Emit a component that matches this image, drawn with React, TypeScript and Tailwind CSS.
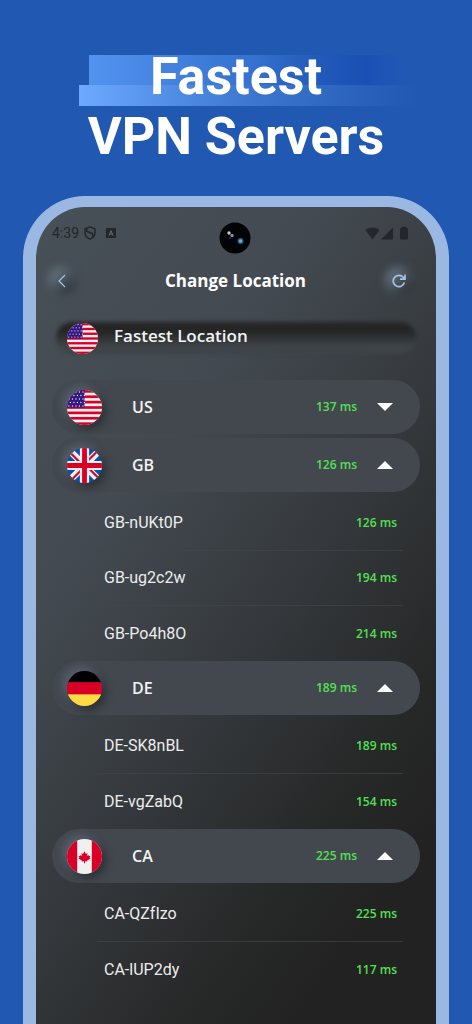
import { useState } from "react";

type Server = { name: string; ping: number };
type Country = { code: string; ping: number; open: boolean; servers: Server[] };

const COUNTRIES: Country[] = [
  { code: "US", ping: 137, open: false, servers: [] },
  {
    code: "GB",
    ping: 126,
    open: true,
    servers: [
      { name: "GB-nUKt0P", ping: 126 },
      { name: "GB-ug2c2w", ping: 194 },
      { name: "GB-Po4h8O", ping: 214 },
    ],
  },
  {
    code: "DE",
    ping: 189,
    open: true,
    servers: [
      { name: "DE-SK8nBL", ping: 189 },
      { name: "DE-vgZabQ", ping: 154 },
    ],
  },
  {
    code: "CA",
    ping: 225,
    open: true,
    servers: [
      { name: "CA-QZfIzo", ping: 225 },
      { name: "CA-lUP2dy", ping: 117 },
    ],
  },
];

const UsFlag = () => (
  <>
    <rect width="36" height="36" fill="#f3f3f3" />
    {[0, 1, 2, 3, 4, 5, 6].map((i) => (
      <rect key={i} y={i * 5.54} width="36" height="2.77" fill="#d80027" />
    ))}
    <rect width="18" height="18" fill="#33197f" />
    {[0, 1, 2, 3, 4].map((r) =>
      [0, 1, 2, 3, 4].map((c) => (
        <circle key={`${r}-${c}`} cx={2 + c * 3.6 + (r % 2) * 1.5} cy={2 + r * 3.6} r="0.7" fill="#e8e4f5" />
      ))
    )}
  </>
);

const GbFlag = () => (
  <>
    <rect width="36" height="36" fill="#0052b4" />
    <path d="M0 0L36 36M36 0L0 36" stroke="#f0f0f0" strokeWidth="7" />
    <path d="M0 1.5L18 19.5M36 34.5L18 16.5M34.5 0L16.5 18M1.5 36L19.5 18" stroke="#d80027" strokeWidth="2.2" />
    <path d="M18 0V36M0 18H36" stroke="#f0f0f0" strokeWidth="9.5" />
    <path d="M18 0V36M0 18H36" stroke="#d80027" strokeWidth="5" />
  </>
);

const DeFlag = () => (
  <>
    <rect width="36" height="12" fill="#000" />
    <rect y="11.5" width="36" height="13" fill="#d80027" />
    <rect y="24" width="36" height="12" fill="#ffda44" />
  </>
);

const CaFlag = () => (
  <>
    <rect width="36" height="36" fill="#f0f0f0" />
    <rect width="10.5" height="36" fill="#d80027" />
    <rect x="25.5" width="10.5" height="36" fill="#d80027" />
    <path
      d="M18 12.5l1.5 2.8 1.6-.8-.5 3 1.6-1.1.3 1 1.7.2-1 1.7 1 .7-3.5 2.2.2 1-2.4-.3V25h-1v-2.1l-2.4.3.2-1-3.5-2.2 1-.7-1-1.7 1.7-.2.3-1 1.6 1.1-.5-3 1.6.8z"
      fill="#d80027"
    />
  </>
);

const FLAGS: Record<string, () => React.JSX.Element> = {
  US: UsFlag,
  GB: GbFlag,
  DE: DeFlag,
  CA: CaFlag,
};

const Flag = ({ code, className }: { code: string; className: string }) => {
  const Art = FLAGS[code];
  return (
    <svg viewBox="0 0 36 36" aria-hidden="true" className={`shrink-0 rounded-full ${className}`}>
      <Art />
    </svg>
  );
};

const StatusBar = () => (
  <div className="flex h-[31px] items-center px-4 text-[#23272b]">
    <span className="font-[Roboto,sans-serif] text-sm">4:39</span>
    <svg viewBox="0 0 12 14" className="ml-[5px] h-[14px] w-[12px]" fill="none" stroke="currentColor" strokeWidth="1.4" aria-hidden="true">
      <path d="M6 .9L11 2.8V6.5C11 9.6 9 12 6 13 3 12 1 9.6 1 6.5V2.8Z" />
      <path d="M2.8 2.5V5.5L8.6 7.6V11.4" />
    </svg>
    <svg viewBox="0 0 10 10" className="ml-2.5 size-[10px]" aria-hidden="true">
      <rect width="10" height="10" rx="1" fill="currentColor" />
      <path d="M3 7.7L5 2.6 7 7.7M3.7 6.1H6.3" stroke="#646c73" strokeWidth="1" fill="none" />
    </svg>
    {/* front camera */}
    <svg viewBox="0 0 32 32" className="ml-[103px] mt-2.5 size-8" aria-hidden="true">
      <circle cx="16" cy="16" r="15.5" fill="#020304" />
      <circle cx="10" cy="11" r="1.7" fill="#bccbd0" />
      <circle cx="13" cy="13.5" r="1.7" fill="#8d86ae" />
      <circle cx="11" cy="16" r="1.2" fill="#1a2948" />
      <circle cx="21.5" cy="19" r="3" fill="#285a86" />
      <circle cx="21.5" cy="19" r="1.7" fill="#62aede" />
    </svg>
    <svg viewBox="0 0 44 14" className="ml-auto mr-[11px] h-[14px] w-[44px]" fill="currentColor" aria-hidden="true">
      <path d="M7.5 13.5L.6 4.2C2 2.5 4.5 1.5 7.5 1.5S13 2.5 14.4 4.2Z" />
      <path d="M28 1.5V13.5H16Z" />
      <path d="M37 1.5V.8H41V1.5Q43 1.5 43 3.3V12Q43 13.5 41.5 13.5H36.5Q35 13.5 35 12V3.3Q35 1.5 37 1.5Z" />
    </svg>
  </div>
);

const IconButton = ({ label, className, children }: { label: string; className: string; children: React.ReactNode }) => (
  <button
    type="button"
    aria-label={label}
    className={`relative isolate flex size-6 items-center justify-center text-[#a5c2e2] ${className}`}
  >
    <span className="absolute -inset-0.5 -z-10 rounded-full bg-linear-to-br from-[#788b9e] via-[#4b545d] to-[#202326] blur-[4px]" />
    {children}
  </button>
);

const CountryGroup = ({ country }: { country: Country }) => {
  const [open, setOpen] = useState(country.open);
  return (
    <li>
      <button
        type="button"
        aria-expanded={open}
        onClick={() => setOpen(!open)}
        className="mb-1 flex h-[54px] w-full items-center rounded-full bg-[#43484f] pl-[15px] pr-[27px] text-left"
      >
        <Flag code={country.code} className="size-[35px] shadow-[-4px_-4px_8px_#6d7f9170,4px_4px_8px_#272a2dcc]" />
        <span className="ml-[30px] grow text-base font-semibold text-[#f3f3f3]">{country.code}</span>
        <span className="text-xs font-semibold text-[#52e052]">{country.ping} ms</span>
        <svg viewBox="0 0 16 8" className="ml-5 h-2 w-4" fill="#fff" aria-hidden="true">
          <path d={open ? "M0 8L8 0L16 8Z" : "M0 0L8 8L16 0Z"} />
        </svg>
      </button>
      {open && (
        <ul className="ml-[45px] mr-[17px] divide-y divide-[#43474f99]">
          {country.servers.map((server) => (
            <li key={server.name} className="flex h-[55px] items-center justify-between pl-[7px] pr-1.5">
              <span className="font-[Roboto,sans-serif] text-base text-[#ededed]">{server.name}</span>
              <span className="text-xs font-semibold text-[#52e052]">{server.ping} ms</span>
            </li>
          ))}
        </ul>
      )}
    </li>
  );
};

export default function App() {
  return (
    <div className="flex h-screen min-h-[640px] flex-col overflow-hidden bg-[#2158b1] px-[23px] font-['Open_Sans',sans-serif]">
      <header className="relative isolate shrink-0 pt-[47px] text-center">
        <div className="absolute left-[66px] right-8 top-[55px] -z-10 h-[31px] bg-linear-to-r from-[#5393f0] via-[#3a78d6] via-40% to-[#2158b100]">
          <div className="h-full bg-linear-to-r from-[#1a50b500] from-50% via-[#1a50b5] via-85% to-[#1a50b500]" />
        </div>
        <div className="absolute left-14 right-8 top-[85px] -z-10 h-[21px] bg-linear-to-r from-[#6ca9ff] via-[#3d77cf] via-50% to-[#2158b100]" />
        <h1 className="font-[Roboto,sans-serif] text-[52px]/[60px] font-bold text-white">
          Fastest
          <br />
          VPN Servers
        </h1>
      </header>

      <main className="mt-[29px] grow rounded-t-[62px] border-x-[13px] border-t-[11px] border-[#9ab8e1] bg-[linear-gradient(125deg,#485058_0%,#434a51_30%,#35393d_53%,#272828_73%,#222_85%)] bg-origin-border">
        <div className="pt-[10px]">
          <StatusBar />
        </div>

        <div className="grid grid-cols-[1fr_auto_1fr] items-center pl-3.5 pr-[25px] pt-[15px]">
          <IconButton label="Back" className="justify-self-start">
            <svg viewBox="0 0 8 14" className="h-[14px] w-2" fill="none" stroke="currentColor" strokeWidth="1.2" aria-hidden="true">
              <path d="M7 1L1 7L7 13" />
            </svg>
          </IconButton>
          <h2 className="pl-2.5 text-[17px]/9 font-bold text-white">Change Location</h2>
          <IconButton label="Refresh" className="justify-self-end">
            <svg viewBox="0 0 14 14" className="size-[14px]" fill="none" stroke="currentColor" strokeWidth="1.7" aria-hidden="true">
              <path d="M12.4 8.6A5.7 5.7 0 1 1 11.2 3.2L13 5M13 .5V5.2H8" />
            </svg>
          </IconButton>
        </div>

        <div className="px-4">
          <button type="button" className="relative isolate mt-[21px] flex h-9 w-full items-center pl-[15px] text-left">
            <span className="absolute inset-x-1 inset-y-0.5 -z-10 rounded-full bg-linear-to-b from-[#252525] from-30% to-[#3e4448] to-75% blur-[2px]" />
            <Flag code="US" className="size-[31px]" />
            <span className="ml-4 pb-1 text-[17px] font-semibold text-[#f3f3f3]">Fastest Location</span>
          </button>

          <ul className="mt-6">
            {COUNTRIES.map((country) => (
              <CountryGroup key={country.code} country={country} />
            ))}
          </ul>
        </div>
      </main>
    </div>
  );
}
